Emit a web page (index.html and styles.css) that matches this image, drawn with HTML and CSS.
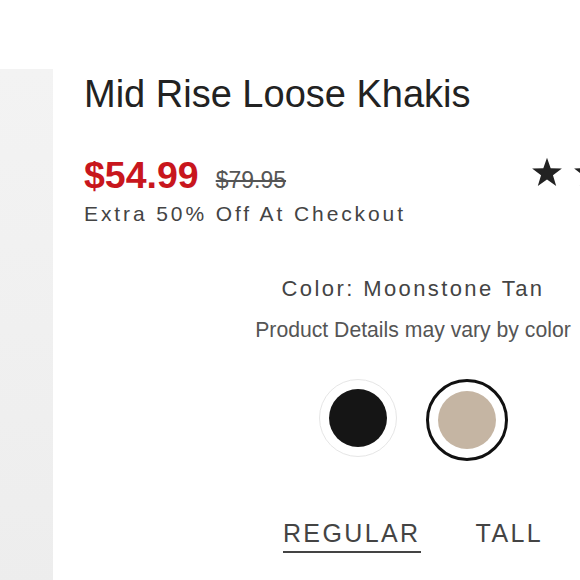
FILE: index.html
```html
<!DOCTYPE html>
<html>
<head>
<meta charset="utf-8">
<link rel="stylesheet" href="styles.css">
</head>
<body>
<div class="page">
  <div class="gallery"></div>
  <div class="info">
    <h1 class="title">Mid Rise Loose Khakis</h1>
    <div class="price-row">
      <div class="prices">
        <div class="price-line">
          <span class="sale">$54.99</span>
          <span class="orig">$79.95</span>
        </div>
        <div class="promo">Extra 50% Off At Checkout</div>
      </div>
      <div class="stars">
        <svg class="star" viewBox="0 0 24 23" aria-hidden="true"><polygon points="12,0.5 14.82,8.62 23.41,8.79 16.57,13.98 19.05,22.21 12,17.3 4.95,22.21 7.43,13.98 0.59,8.79 9.18,8.62"/></svg>
        <svg class="star" viewBox="0 0 24 23" aria-hidden="true"><polygon points="12,0.5 14.82,8.62 23.41,8.79 16.57,13.98 19.05,22.21 12,17.3 4.95,22.21 7.43,13.98 0.59,8.79 9.18,8.62"/></svg>
        <svg class="star" viewBox="0 0 24 23" aria-hidden="true"><polygon points="12,0.5 14.82,8.62 23.41,8.79 16.57,13.98 19.05,22.21 12,17.3 4.95,22.21 7.43,13.98 0.59,8.79 9.18,8.62"/></svg>
        <svg class="star" viewBox="0 0 24 23" aria-hidden="true"><polygon points="12,0.5 14.82,8.62 23.41,8.79 16.57,13.98 19.05,22.21 12,17.3 4.95,22.21 7.43,13.98 0.59,8.79 9.18,8.62"/></svg>
        <svg class="star" viewBox="0 0 24 23" aria-hidden="true"><polygon points="12,0.5 14.82,8.62 23.41,8.79 16.57,13.98 19.05,22.21 12,17.3 4.95,22.21 7.43,13.98 0.59,8.79 9.18,8.62"/></svg>
      </div>
    </div>
    <div class="color-block">
      <div class="color-name">Color: Moonstone Tan</div>
      <div class="color-note">Product Details may vary by color</div>
      <div class="swatches">
        <div class="swatch"><span class="dot black"></span></div>
        <div class="swatch selected"><span class="dot tan"></span></div>
      </div>
      <div class="fits">
        <span class="fit active">REGULAR</span>
        <span class="fit">TALL</span>
      </div>
    </div>
  </div>
</div>
</body>
</html>
```
FILE: styles.css
```css
html, body {
  margin: 0;
  padding: 0;
  background: #fff;
  overflow: hidden;
}
body {
  font-family: "Liberation Sans", Arial, sans-serif;
  color: #333;
}
.page {
  display: flex;
  align-items: flex-start;
  width: 742px;
}
.gallery {
  width: 53px;
  height: 520px;
  margin-top: 69px;
  background: linear-gradient(#f3f3f3, #ededed);
  flex: none;
}
.info {
  margin-left: 31px;
  width: 658px;
  flex: none;
}
.title {
  margin: 70px 0 0;
  font-size: 38px;
  font-weight: normal;
  line-height: 48px;
  color: #222;
}
.price-row {
  display: flex;
  justify-content: space-between;
  margin-top: 37px;
}
.price-line {
  display: flex;
  align-items: baseline;
  gap: 17px;
}
.sale {
  font-size: 37.5px;
  font-weight: bold;
  color: #c8161d;
  line-height: 40px;
}
.orig {
  font-size: 23px;
  color: #555;
  text-decoration: line-through;
}
.promo {
  font-size: 21px;
  letter-spacing: 2.9px;
  color: #444;
  margin-top: 6px;
  line-height: 26px;
}
.stars {
  display: flex;
  gap: 8px;
  margin-top: 2px;
  margin-right: 10px;
}
.star {
  width: 34px;
  height: 30px;
  fill: #222;
}
.color-block {
  display: flex;
  flex-direction: column;
  align-items: center;
  margin-top: 48px;
}
.color-name {
  font-size: 22px;
  letter-spacing: 2.4px;
  color: #444;
  line-height: 28px;
}
.color-note {
  font-size: 21.2px;
  color: #555;
  margin-top: 14px;
  line-height: 26px;
}
.swatches {
  display: flex;
  gap: 29px;
  margin-top: 36px;
}
.swatch {
  width: 76px;
  height: 76px;
  border-radius: 50%;
  border: 1px solid #e6e6e6;
  display: flex;
  align-items: center;
  justify-content: center;
}
.swatch.selected {
  border: 3px solid #111;
}
.dot {
  width: 58px;
  height: 58px;
  border-radius: 50%;
}
.dot.black { background: #151515; }
.dot.tan { background: #c5b5a3; }
.fits {
  display: flex;
  gap: 55px;
  margin-top: 57px;
}
.fit {
  font-size: 25px;
  letter-spacing: 2.4px;
  color: #444;
  line-height: 30px;
  padding-bottom: 3px;
}
.fit.active {
  border-bottom: 2px solid #444;
}
```
